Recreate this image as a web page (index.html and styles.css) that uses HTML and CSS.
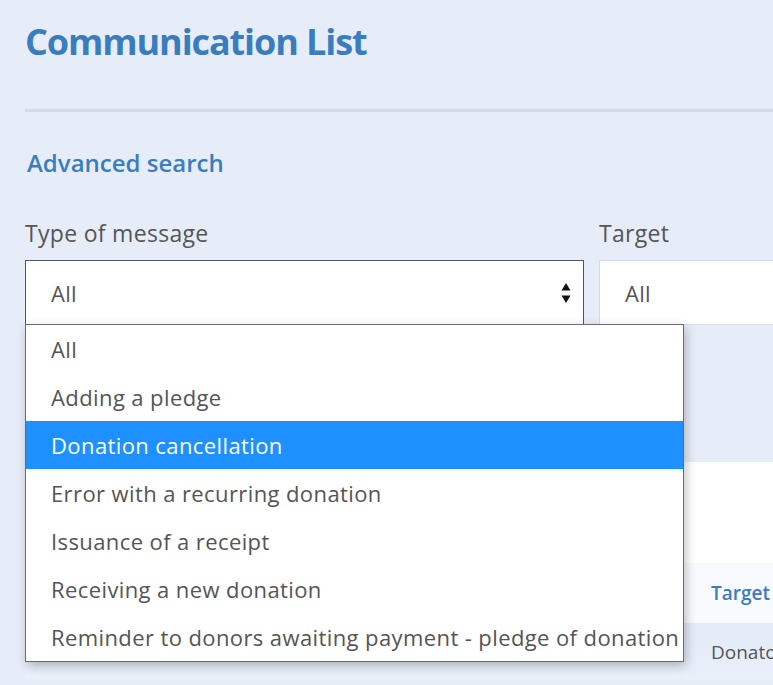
FILE: index.html
```html
<!DOCTYPE html>
<html lang="en">
<head>
  <meta charset="UTF-8" />
  <meta name="viewport" content="width=device-width, initial-scale=1.0" />
  <title>Communication List</title>
  <link rel="stylesheet" href="styles.css">
</head>
<body>
  <div class="page">
    <h1 class="page-title">Communication List</h1>
    <hr class="divider">

    <h3 class="section-title">Advanced search</h3>

    <div class="filters">
      <div class="field">
        <label class="field-label">Type of message</label>
        <div class="select-box is-open">
          <span>All</span>
          <svg class="select-arrows" width="10" height="22" viewBox="0 0 10 22">
            <path d="M5 1 L9.5 8.5 H0.5 Z" fill="#111" />
            <path d="M5 21 L9.5 13.5 H0.5 Z" fill="#111" />
          </svg>
        </div>
        <ul class="dropdown">
          <li>All</li>
          <li>Adding a pledge</li>
          <li class="active">Donation cancellation</li>
          <li>Error with a recurring donation</li>
          <li>Issuance of a receipt</li>
          <li>Receiving a new donation</li>
          <li>Reminder to donors awaiting payment - pledge of donation</li>
        </ul>
      </div>

      <div class="field">
        <label class="field-label">Target</label>
        <div class="select-box">
          <span>All</span>
        </div>
      </div>
    </div>

    <div class="panel">
      <div class="panel-top"></div>
      <div class="table-row table-head">
        <div class="cell"></div>
        <div class="cell">Target</div>
      </div>
      <div class="table-row table-body">
        <div class="cell"></div>
        <div class="cell">Donator</div>
      </div>
    </div>
  </div>
</body>
</html>
```

FILE: styles.css
```css
html {
  font-size: 16px;
}

body {
  margin: 0;
  background: #e7edf8;
  font-family: "Open Sans", Arial, sans-serif;
  color: #555;
  overflow: hidden;
}

.page {
  padding: 0 0 0 25px;
  width: 900px;
}

.page-title {
  margin: 0;
  padding-top: 20px;
  font-size: 36px;
  line-height: 44px;
  font-weight: 700;
  letter-spacing: -1.1px;
  color: #3a7dbf;
}

.divider {
  margin: 45px 0 0;
  border: none;
  border-top: 3px solid #d5dbe6;
}

.section-title {
  margin: 35px 0 0 2px;
  font-size: 24px;
  line-height: 32px;
  font-weight: 600;
  color: #3a7dbf;
}

.filters {
  display: grid;
  grid-template-columns: 559px 1fr;
  gap: 15px;
  margin-top: 40px;
}

.field {
  position: relative;
}

.field-label {
  display: block;
  font-size: 23px;
  line-height: 28px;
  letter-spacing: 0.3px;
  margin-bottom: 13px;
}

.select-box {
  height: 63px;
  background: #fff;
  border: 1px solid #d3dbe8;
  display: flex;
  align-items: center;
  justify-content: space-between;
  padding: 0 12px 0 25px;
  font-size: 22px;
  letter-spacing: 0.3px;
}

.select-box.is-open {
  border-color: #555;
}

.select-arrows {
  display: block;
}

.dropdown {
  position: absolute;
  top: 105px;
  left: 0;
  width: 657px;
  margin: 0;
  padding: 0;
  list-style: none;
  background: #fff;
  border: 1px solid #6b6b6b;
  box-shadow: 2px 4px 10px rgba(0, 0, 0, 0.25);
  z-index: 10;
}

.dropdown li {
  height: 48px;
  line-height: 48px;
  padding-left: 25px;
  font-size: 22px;
  letter-spacing: 0.4px;
  color: #555;
  white-space: nowrap;
}

.dropdown li.active {
  background: #1e90ff;
  color: #fff;
}

.panel {
  margin-top: 137px;
  background: #fff;
}

.panel-top {
  height: 101px;
}

.table-row {
  display: grid;
  grid-template-columns: 686px 1fr;
  align-items: center;
}

.table-head {
  height: 60px;
  background: #f8fafd;
  color: #3a7dbf;
  font-weight: 600;
  font-size: 19px;
}

.table-body {
  height: 57px;
  background: linear-gradient(#e2eaf8, #eaf0fa);
  font-size: 19px;
}

.cell:first-child {
  padding-left: 25px;
}
```
